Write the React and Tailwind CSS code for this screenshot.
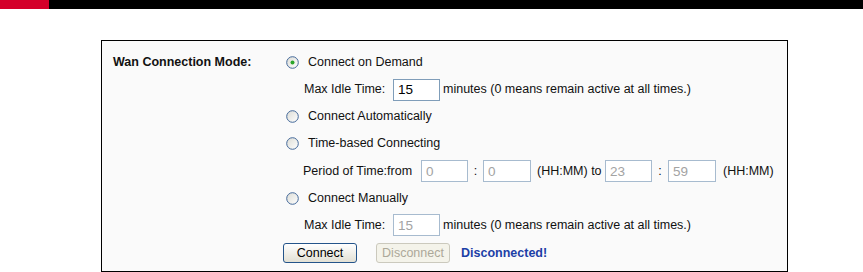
const Radio = ({ checked }) => (
  <svg width="13" height="13" viewBox="0 0 13 13" className="shrink-0">
    <defs>
      <linearGradient id={checked ? 'rgc' : 'rgu'} x1="0" y1="0" x2="1" y2="1">
        <stop offset="0" stopColor="#dcdcd5" />
        <stop offset="1" stopColor="#ffffff" />
      </linearGradient>
    </defs>
    <circle cx="6.5" cy="6.5" r="5.8" fill={`url(#${checked ? 'rgc' : 'rgu'})`} stroke="#44699a" strokeWidth="1" />
    {checked && <circle cx="6.5" cy="6.5" r="2" fill="#2aa52a" />}
  </svg>
);

const Field = ({ value, disabled, className = '' }) => (
  <input
    readOnly
    value={value}
    disabled={disabled}
    className={`h-[22px] w-[47px] border border-[#7f9db9] bg-white px-[4px] text-[13.5px] outline-none ${
      disabled ? 'border-[#a7bbcf] text-[#a3a3a3]' : 'text-black'
    } ${className}`}
  />
);

const RadioRow = ({ checked, label, h }) => (
  <div className={`flex items-center ${h} pl-[3px]`}>
    <Radio checked={checked} />
    <span className="ml-[9px]">{label}</span>
  </div>
);

const IdleRow = ({ disabled, h }) => (
  <div className={`flex items-center ${h}`}>
    <span className="w-[110px] pl-[21px]">Max Idle Time:</span>
    <Field value="15" disabled={disabled} />
    <span className="ml-[3px]">minutes (0 means remain active at all times.)</span>
  </div>
);

export default function App() {
  return (
    <div className="min-h-[272px] bg-white text-[12.5px] text-[#111]" style={{ fontFamily: '"Liberation Sans", Arial, sans-serif' }}>
      <div className="flex h-[9px] bg-black">
        <div className="w-[49px] bg-[#d4002a]" />
      </div>

      <div className="ml-[101px] mt-[31px] flex h-[232px] w-[687px] border border-black bg-[#fafafa] pt-[8px]">
        <div className="w-[181px] pl-[11px]">
          <div className="flex h-[26px] items-center font-bold">Wan Connection Mode:</div>
        </div>

        <div className="flex flex-col">
          <RadioRow checked label="Connect on Demand" h="h-[26px]" />
          <IdleRow h="h-[29px]" />
          <RadioRow label="Connect Automatically" h="h-[24px]" />
          <RadioRow label="Time-based Connecting" h="h-[30px]" />

          <div className="flex h-[26px] items-center">
            <span className="w-[138px] pl-[20px]">Period of Time:from</span>
            <Field value="0" disabled />
            <span className="w-[15px] text-center">:</span>
            <Field value="0" disabled className="w-[48px]" />
            <span className="w-[74px] pl-[6px]">(HH:MM) to</span>
            <Field value="23" disabled />
            <span className="w-[16px] text-center">:</span>
            <Field value="59" disabled className="w-[48px]" />
            <span className="ml-[7px]">(HH:MM)</span>
          </div>

          <RadioRow label="Connect Manually" h="h-[28px]" />
          <IdleRow disabled h="h-[26px]" />

          <div className="flex h-[30px] items-center">
            <button className="h-[20px] w-[74px] rounded-[3px] border border-[#24548a] bg-gradient-to-b from-white to-[#e2e0d4] text-black">
              Connect
            </button>
            <button
              disabled
              className="ml-[19px] h-[20px] w-[74px] rounded-[3px] border border-[#cbc9bd] bg-[#f4f3ea] text-[#aca899]"
            >
              Disconnect
            </button>
            <span className="ml-[11px] font-bold text-[#1c40a6]">Disconnected!</span>
          </div>
        </div>
      </div>
    </div>
  );
}
